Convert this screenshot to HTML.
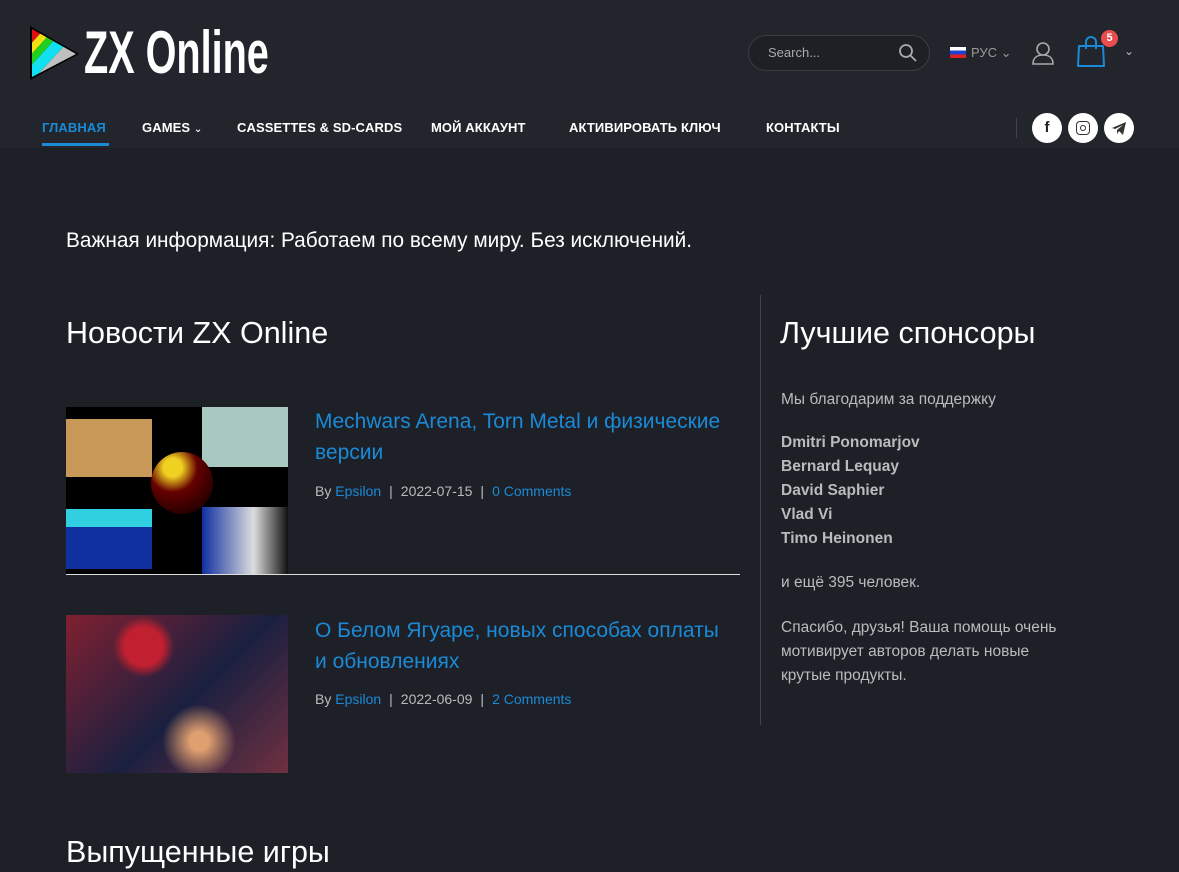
<!DOCTYPE html>
<html><head><meta charset="utf-8"><style>
*{margin:0;padding:0;box-sizing:border-box}
body{width:1179px;height:872px;overflow:hidden;background:#1e2028;font-family:"Liberation Sans","DejaVu Sans",sans-serif;color:#fff;position:relative}
.hdr{position:absolute;left:0;top:0;width:1179px;height:148px;background:#22252b}
.abs{position:absolute}
.nav{position:absolute;top:120px;font-size:13px;font-weight:bold;color:#fff;letter-spacing:0.1px}
a{color:#1a8ad6;text-decoration:none}
.meta{font-size:14px;color:#bbb}
.sep{color:#bbb;margin:0 8px}
.sp{position:absolute;left:781px;font-size:15.5px;color:#bbb;line-height:24px;width:310px}
</style></head><body>
<div class="hdr"></div>
<svg class="abs" style="left:28px;top:25px" width="52" height="56" viewBox="0 0 52 56">
<defs><clipPath id="c"><polygon points="4,4 48,29 4,52"/></clipPath></defs>
<polygon points="2,1 51,29 2,55" fill="#000"/>
<g clip-path="url(#c)">
<polygon points="0,0 20,0 0,22" fill="#e01010"/>
<polygon points="20,0 30,0 0,33 0,22" fill="#f0e010"/>
<polygon points="30,0 40,0 0,44 0,33" fill="#20d020"/>
<polygon points="40,0 52,0 52,4 0,60 0,44" fill="#10e0f0"/>
<polygon points="52,4 52,60 0,60" fill="#c0c0c0"/>
</g></svg>
<div class="abs" style="left:84px;top:20px;font-size:60px;font-weight:bold;line-height:66px;letter-spacing:0;transform:scaleX(0.66);transform-origin:left">ZX Online</div>
<div class="abs" style="left:748px;top:35px;width:182px;height:36px;border:1px solid #3a3d42;border-radius:18px;background:#1e2026"></div>
<div class="abs" style="left:768px;top:45px;font-size:13px;color:#aaa">Search...</div>
<svg class="abs" style="left:898px;top:43px" width="20" height="20" viewBox="0 0 20 20"><circle cx="8" cy="8" r="6" stroke="#aaa" stroke-width="1.8" fill="none"/><line x1="12.5" y1="12.5" x2="18" y2="18" stroke="#aaa" stroke-width="1.8"/></svg>
<div class="abs" style="left:950px;top:47px;width:16px;height:11px;background:linear-gradient(#fff 33%,#2040d0 33% 66%,#e02020 66%)"></div>
<div class="abs" style="left:971px;top:45px;font-size:13px;color:#999">РУС ⌄</div>
<svg class="abs" style="left:1031px;top:41px" width="24" height="24" viewBox="0 0 24 24"><circle cx="12" cy="8" r="6" stroke="#aaa" stroke-width="1.6" fill="none"/><path d="M2 23c0-6 4-9 10-9s10 3 10 9z" stroke="#aaa" stroke-width="1.6" fill="none"/></svg>
<svg class="abs" style="left:1076px;top:34px" width="30" height="34" viewBox="0 0 30 34"><path d="M3 12h24l1 20H2z" stroke="#1a8ad6" stroke-width="2" fill="none" stroke-linejoin="round"/><path d="M10 15V8a5 5 0 0 1 10 0v7" stroke="#1a8ad6" stroke-width="2" fill="none"/></svg>
<div class="abs" style="left:1101px;top:30px;width:17px;height:17px;border-radius:50%;background:#e84c4c;font-size:11px;font-weight:bold;text-align:center;line-height:17px">5</div>
<div class="abs" style="left:1124px;top:44px;font-size:12px;color:#bbb">⌄</div>
<div class="nav" style="left:42px;color:#1a8ad6">ГЛАВНАЯ</div>
<div class="abs" style="left:42px;top:143px;width:67px;height:3px;background:#1a8ad6"></div>
<div class="nav" style="left:142px">GAMES <span style="font-size:10px">⌄</span></div>
<div class="nav" style="left:237px">CASSETTES &amp; SD-CARDS</div>
<div class="nav" style="left:431px">МОЙ АККАУНТ</div>
<div class="nav" style="left:569px">АКТИВИРОВАТЬ КЛЮЧ</div>
<div class="nav" style="left:766px">КОНТАКТЫ</div>
<div class="abs" style="left:1016px;top:118px;width:1px;height:20px;background:#444"></div>
<div class="abs" style="left:1032px;top:113px;width:30px;height:30px;border-radius:50%;background:#fff;color:#222;font-weight:bold;font-size:15px;text-align:center;line-height:30px">f</div>
<div class="abs" style="left:1068px;top:113px;width:30px;height:30px;border-radius:50%;background:#fff"><div style="margin:8px;width:14px;height:14px;border:1.6px solid #333;border-radius:4px;position:relative"><div style="position:absolute;left:2.5px;top:2.5px;width:6px;height:6px;border:1.5px solid #333;border-radius:50%"></div></div></div>
<div class="abs" style="left:1104px;top:113px;width:30px;height:30px;border-radius:50%;background:#fff"><svg width="30" height="30" viewBox="0 0 30 30"><path d="M8 15l14-6-3 13-4-4-2 3v-4l6-5-8 4z" fill="#333"/></svg></div>
<div class="abs" style="left:66px;top:229px;font-size:20.8px">Важная информация: Работаем по всему миру. Без исключений.</div>
<div class="abs" style="left:66px;top:316px;font-size:30.5px">Новости ZX Online</div>
<div class="abs" style="left:760px;top:295px;width:1px;height:430px;background:#444"></div>
<div class="abs" style="left:66px;top:407px;width:222px;height:167px;background:#000;overflow:hidden">
<div class="abs" style="left:0;top:12px;width:86px;height:58px;background:#c89858"></div>
<div class="abs" style="left:136px;top:0;width:86px;height:60px;background:#a8c8c0"></div>
<div class="abs" style="left:85px;top:45px;width:62px;height:62px;border-radius:50%;background:radial-gradient(circle at 35% 25%,#f0d020 15%,#600 40%,#200 80%)"></div>
<div class="abs" style="left:0;top:102px;width:86px;height:60px;background:linear-gradient(#30d0e0 30%,#1030a0 30%)"></div>
<div class="abs" style="left:136px;top:100px;width:86px;height:67px;background:linear-gradient(90deg,#1030a0,#ddd 60%,#111)"></div>
</div>
<div class="abs" style="left:66px;top:574px;width:674px;height:1px;background:#ddd"></div>
<div class="abs" style="left:315px;top:406px;font-size:21px;line-height:31px;color:#1a8ad6;width:430px">Mechwars Arena, Torn Metal и физические версии</div>
<div class="abs meta" style="left:315px;top:483px">By <a>Epsilon</a><span class="sep">|</span>2022-07-15<span class="sep">|</span><a>0 Comments</a></div>
<div class="abs" style="left:66px;top:615px;width:222px;height:158px;background:radial-gradient(circle at 35% 20%,#c02030 10%,transparent 16%),radial-gradient(circle at 60% 80%,#e0a070 5%,transparent 20%),linear-gradient(135deg,#802030,#1a2040 55%,#703040)"></div>
<div class="abs" style="left:315px;top:615px;font-size:21px;line-height:31px;color:#1a8ad6;width:415px">О Белом Ягуаре, новых способах оплаты и обновлениях</div>
<div class="abs meta" style="left:315px;top:691px">By <a>Epsilon</a><span class="sep">|</span>2022-06-09<span class="sep">|</span><a>2 Comments</a></div>
<div class="abs" style="left:66px;top:835px;font-size:30.5px">Выпущенные игры</div>
<div class="abs" style="left:780px;top:316px;font-size:30.5px">Лучшие спонсоры</div>
<div class="sp" style="top:388px">Мы благодарим за поддержку</div>
<div class="sp" style="top:431px;font-weight:bold">Dmitri Ponomarjov<br>Bernard Lequay<br>David Saphier<br>Vlad Vi<br>Timo Heinonen</div>
<div class="sp" style="top:571px">и ещё 395 человек.</div>
<div class="sp" style="top:616px;width:300px">Спасибо, друзья! Ваша помощь очень мотивирует авторов делать новые крутые продукты.</div>
</body></html>
